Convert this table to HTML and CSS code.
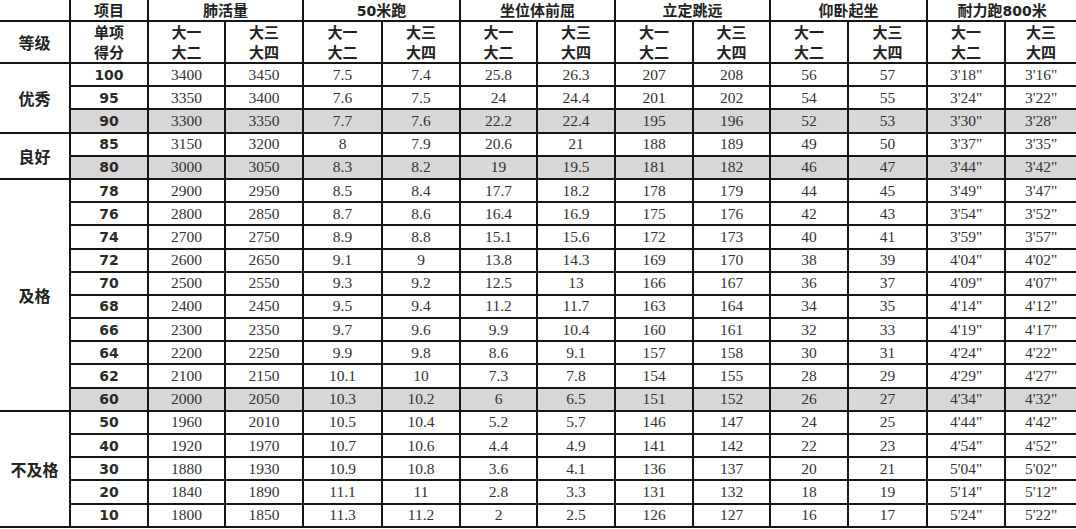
FILE: index.html
```html
<!DOCTYPE html>
<html lang="zh">
<head>
<meta charset="utf-8">
<title>体质测试评分标准</title>
<link rel="stylesheet" href="styles.css">
</head>
<body>
<table class="grid">
  <colgroup>
    <col style="width:70px"><col style="width:78px">
    <col style="width:77px"><col style="width:78px">
    <col style="width:79px"><col style="width:78px">
    <col style="width:77px"><col style="width:78px">
    <col style="width:78px"><col style="width:77px">
    <col style="width:78px"><col style="width:79px">
    <col style="width:78px"><col style="width:71px">
  </colgroup>
  <thead>
    <tr class="h1">
      <th class="blank"></th>
      <th>项目</th>
      <th colspan="2">肺活量</th>
      <th colspan="2"><span class="num">50</span>米跑</th>
      <th colspan="2">坐位体前屈</th>
      <th colspan="2">立定跳远</th>
      <th colspan="2">仰卧起坐</th>
      <th colspan="2">耐力跑<span class="num">800</span>米</th>
    </tr>
    <tr class="h2">
      <th class="lvl">等级</th>
      <th><span class="ln">单项</span><span class="ln">得分</span></th>
      <th><span class="ln">大一</span><span class="ln">大二</span></th><th><span class="ln">大三</span><span class="ln">大四</span></th>
      <th><span class="ln">大一</span><span class="ln">大二</span></th><th><span class="ln">大三</span><span class="ln">大四</span></th>
      <th><span class="ln">大一</span><span class="ln">大二</span></th><th><span class="ln">大三</span><span class="ln">大四</span></th>
      <th><span class="ln">大一</span><span class="ln">大二</span></th><th><span class="ln">大三</span><span class="ln">大四</span></th>
      <th><span class="ln">大一</span><span class="ln">大二</span></th><th><span class="ln">大三</span><span class="ln">大四</span></th>
      <th><span class="ln">大一</span><span class="ln">大二</span></th><th><span class="ln">大三</span><span class="ln">大四</span></th>
    </tr>
  </thead>
  <tbody>
    <tr><th class="lvl" rowspan="3">优秀</th><td class="sc">100</td><td>3400</td><td>3450</td><td>7.5</td><td>7.4</td><td>25.8</td><td>26.3</td><td>207</td><td>208</td><td>56</td><td>57</td><td>3'18"</td><td>3'16"</td></tr>
    <tr><td class="sc">95</td><td>3350</td><td>3400</td><td>7.6</td><td>7.5</td><td>24</td><td>24.4</td><td>201</td><td>202</td><td>54</td><td>55</td><td>3'24"</td><td>3'22"</td></tr>
    <tr class="gray"><td class="sc">90</td><td>3300</td><td>3350</td><td>7.7</td><td>7.6</td><td>22.2</td><td>22.4</td><td>195</td><td>196</td><td>52</td><td>53</td><td>3'30"</td><td>3'28"</td></tr>
    <tr><th class="lvl" rowspan="2">良好</th><td class="sc">85</td><td>3150</td><td>3200</td><td>8</td><td>7.9</td><td>20.6</td><td>21</td><td>188</td><td>189</td><td>49</td><td>50</td><td>3'37"</td><td>3'35"</td></tr>
    <tr class="gray"><td class="sc">80</td><td>3000</td><td>3050</td><td>8.3</td><td>8.2</td><td>19</td><td>19.5</td><td>181</td><td>182</td><td>46</td><td>47</td><td>3'44"</td><td>3'42"</td></tr>
    <tr><th class="lvl" rowspan="10">及格</th><td class="sc">78</td><td>2900</td><td>2950</td><td>8.5</td><td>8.4</td><td>17.7</td><td>18.2</td><td>178</td><td>179</td><td>44</td><td>45</td><td>3'49"</td><td>3'47"</td></tr>
    <tr><td class="sc">76</td><td>2800</td><td>2850</td><td>8.7</td><td>8.6</td><td>16.4</td><td>16.9</td><td>175</td><td>176</td><td>42</td><td>43</td><td>3'54"</td><td>3'52"</td></tr>
    <tr><td class="sc">74</td><td>2700</td><td>2750</td><td>8.9</td><td>8.8</td><td>15.1</td><td>15.6</td><td>172</td><td>173</td><td>40</td><td>41</td><td>3'59"</td><td>3'57"</td></tr>
    <tr><td class="sc">72</td><td>2600</td><td>2650</td><td>9.1</td><td>9</td><td>13.8</td><td>14.3</td><td>169</td><td>170</td><td>38</td><td>39</td><td>4'04"</td><td>4'02"</td></tr>
    <tr><td class="sc">70</td><td>2500</td><td>2550</td><td>9.3</td><td>9.2</td><td>12.5</td><td>13</td><td>166</td><td>167</td><td>36</td><td>37</td><td>4'09"</td><td>4'07"</td></tr>
    <tr><td class="sc">68</td><td>2400</td><td>2450</td><td>9.5</td><td>9.4</td><td>11.2</td><td>11.7</td><td>163</td><td>164</td><td>34</td><td>35</td><td>4'14"</td><td>4'12"</td></tr>
    <tr><td class="sc">66</td><td>2300</td><td>2350</td><td>9.7</td><td>9.6</td><td>9.9</td><td>10.4</td><td>160</td><td>161</td><td>32</td><td>33</td><td>4'19"</td><td>4'17"</td></tr>
    <tr><td class="sc">64</td><td>2200</td><td>2250</td><td>9.9</td><td>9.8</td><td>8.6</td><td>9.1</td><td>157</td><td>158</td><td>30</td><td>31</td><td>4'24"</td><td>4'22"</td></tr>
    <tr><td class="sc">62</td><td>2100</td><td>2150</td><td>10.1</td><td>10</td><td>7.3</td><td>7.8</td><td>154</td><td>155</td><td>28</td><td>29</td><td>4'29"</td><td>4'27"</td></tr>
    <tr class="gray"><td class="sc">60</td><td>2000</td><td>2050</td><td>10.3</td><td>10.2</td><td>6</td><td>6.5</td><td>151</td><td>152</td><td>26</td><td>27</td><td>4'34"</td><td>4'32"</td></tr>
    <tr><th class="lvl" rowspan="5">不及格</th><td class="sc">50</td><td>1960</td><td>2010</td><td>10.5</td><td>10.4</td><td>5.2</td><td>5.7</td><td>146</td><td>147</td><td>24</td><td>25</td><td>4'44"</td><td>4'42"</td></tr>
    <tr><td class="sc">40</td><td>1920</td><td>1970</td><td>10.7</td><td>10.6</td><td>4.4</td><td>4.9</td><td>141</td><td>142</td><td>22</td><td>23</td><td>4'54"</td><td>4'52"</td></tr>
    <tr><td class="sc">30</td><td>1880</td><td>1930</td><td>10.9</td><td>10.8</td><td>3.6</td><td>4.1</td><td>136</td><td>137</td><td>20</td><td>21</td><td>5'04"</td><td>5'02"</td></tr>
    <tr><td class="sc">20</td><td>1840</td><td>1890</td><td>11.1</td><td>11</td><td>2.8</td><td>3.3</td><td>131</td><td>132</td><td>18</td><td>19</td><td>5'14"</td><td>5'12"</td></tr>
    <tr><td class="sc">10</td><td>1800</td><td>1850</td><td>11.3</td><td>11.2</td><td>2</td><td>2.5</td><td>126</td><td>127</td><td>16</td><td>17</td><td>5'24"</td><td>5'22"</td></tr>
  </tbody>
</table>
</body>
</html>
```

FILE: styles.css
```css
html, body {
  margin: 0;
  padding: 0;
  background: #ffffff;
}

body {
  width: 1076px;
  height: 529px;
  overflow: hidden;
}

.grid {
  border-collapse: collapse;
  table-layout: fixed;
  width: 1076px;
  color: #2a2a2a;
}

.grid th,
.grid td {
  border: 2px solid #161616;
  padding: 0;
  text-align: center;
  vertical-align: middle;
  white-space: nowrap;
}

.grid tr > :first-child {
  border-left: none;
}

.grid tr > :last-child {
  border-right: none;
}

.grid thead tr.h1 th {
  border-top: none;
}

.grid th {
  font-family: "Noto Sans CJK SC", "DejaVu Sans", sans-serif;
  font-weight: 700;
  font-size: 16px;
  color: #222;
}

.h1 {
  height: 21px;
}

.h1 th {
  font-size: 15px;
  line-height: 18px;
}

.h2 {
  height: 42px;
}

.h2 th {
  font-size: 15px;
  line-height: 20px;
}

.ln {
  display: block;
  height: 20px;
  line-height: 20px;
}

.num {
  font-family: "DejaVu Sans", sans-serif;
  font-weight: 700;
  font-size: 14px;
}

.grid tbody tr {
  height: 23.2px;
}

.grid td {
  font-family: "Liberation Serif", "DejaVu Serif", serif;
  font-size: 15.5px;
  line-height: 18px;
  color: #333;
}

.grid td.sc {
  font-family: "DejaVu Sans", sans-serif;
  font-weight: 700;
  font-size: 14px;
  color: #2a2a2a;
}

.grid th.lvl {
  font-size: 16px;
  line-height: 20px;
  background: #ffffff;
}

.gray td {
  background: #d7d7d7;
}
```
